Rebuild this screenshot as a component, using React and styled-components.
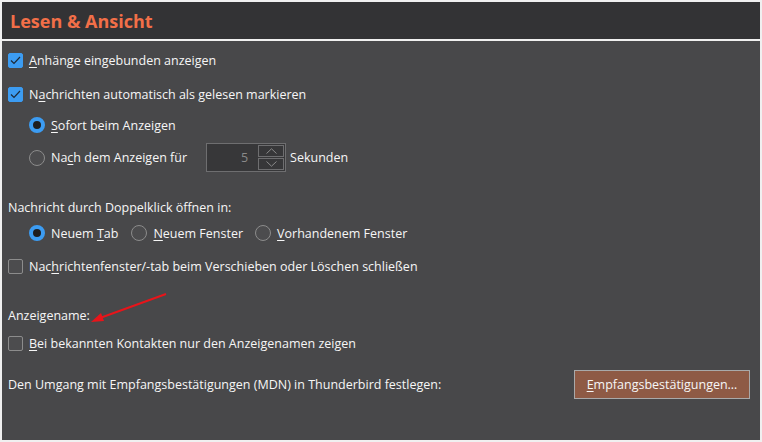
import React from 'react';
import styled, { createGlobalStyle } from 'styled-components';

var GlobalStyle = createGlobalStyle`
    html, body {
        margin: 0;
        padding: 0;
        background: #f0f0f0;
    }
    body {
        font-family: 'Open Sans', 'Noto Sans', sans-serif;
        font-size: 12.5px;
        color: #f6f6f6;
    }
`;

var Frame = styled.div`
    width: 762px;
    height: 442px;
    box-sizing: border-box;
    padding: 2px 2px 2px 2px;
    display: flex;
    flex-direction: column;
    gap: 2px;
    position: relative;
`;

var Header = styled.header`
    height: 37px;
    background: #333335;
    display: flex;
    align-items: center;
    padding-left: 8px;

    h1 {
        margin: 0;
        font-size: 18px;
        font-weight: 700;
        color: #f26f48;
    }
`;

var Panel = styled.section`
    flex: 1;
    background: #48484a;
    padding: 9px 10px 0 6px;
    display: flex;
    flex-direction: column;
`;

var Row = styled.div`
    display: flex;
    align-items: center;
    min-height: 20px;
    margin-top: ${(p) => p.$top || 0}px;
    padding-left: ${(p) => (p.$indent ? 21 : 0)}px;
    justify-content: ${(p) => (p.$spread ? 'space-between' : 'flex-start')};
    white-space: nowrap;
`;

var Box = styled.span`
    width: 15px;
    height: 15px;
    box-sizing: border-box;
    border-radius: 2px;
    margin-right: 6px;
    flex: none;
    display: flex;
    align-items: center;
    justify-content: center;
    background: ${(p) => (p.$on ? '#3c9cf2' : '#4c4c4e')};
    border: 1px solid ${(p) => (p.$on ? '#3c9cf2' : '#8c8c8c')};
`;

var Dot = styled.span`
    width: 16px;
    height: 16px;
    box-sizing: border-box;
    border-radius: 50%;
    margin-right: 6px;
    flex: none;
    background: ${(p) => (p.$on ? '#1e1e20' : '#4c4c4e')};
    border: ${(p) => (p.$on ? '4px solid #3c9cf2' : '1px solid #8c8c8c')};
`;

var Choice = styled.label`
    display: inline-flex;
    align-items: center;
    margin-right: ${(p) => p.$gap || 0}px;

    u {
        text-decoration-thickness: 1px;
        text-underline-offset: 2px;
    }
`;

var Spin = styled.div`
    display: flex;
    width: 80px;
    height: 29px;
    box-sizing: border-box;
    border: 1px solid #6e6e70;
    background: #373739;
    margin: 0 4px 0 19px;

    .value {
        flex: 1;
        display: flex;
        align-items: center;
        justify-content: flex-end;
        padding-right: 10px;
        color: #8a8a8a;
    }

    .arrows {
        width: 26px;
        display: flex;
        flex-direction: column;
        padding: 1px 1px 1px 0;
        gap: 1px;
    }

    .arrows span {
        flex: 1;
        border: 1px solid #6e6e70;
        display: flex;
        align-items: center;
        justify-content: center;
    }
`;

var Button = styled.button`
    width: 176px;
    height: 29px;
    background: #8e5a45;
    border: 1px solid #a9a9a9;
    color: #f6f6f6;
    font-family: inherit;
    font-size: 12.5px;
    padding: 0;

    u {
        text-underline-offset: 2px;
    }
`;

var Annotation = styled.svg`
    position: absolute;
    left: 0;
    top: 0;
    pointer-events: none;
`;

function Check({ on, children }) {
    return (
        <Choice>
            <Box $on={on}>
                {on && (
                    <svg width="11" height="9" viewBox="0 0 11 9">
                        <path d="M1 4.5 L4 7.5 L10 1" fill="none" stroke="#1d2a38" strokeWidth="1.2" />
                    </svg>
                )}
            </Box>
            {children}
        </Choice>
    );
}

function Radio({ on, gap, children }) {
    return (
        <Choice $gap={gap}>
            <Dot $on={on} />
            {children}
        </Choice>
    );
}

export default function App() {
    return (
        <>
            <GlobalStyle />
            <Frame>
                <Header>
                    <h1>Lesen &amp; Ansicht</h1>
                </Header>
                <Panel>
                    <Row>
                        <Check on>
                            <span><u>A</u>nhänge eingebunden anzeigen</span>
                        </Check>
                    </Row>
                    <Row $top={14}>
                        <Check on>
                            <span>N<u>a</u>chrichten automatisch als gelesen markieren</span>
                        </Check>
                    </Row>
                    <Row $top={11} $indent>
                        <Radio on>
                            <span><u>S</u>ofort beim Anzeigen</span>
                        </Radio>
                    </Row>
                    <Row $top={8} $indent>
                        <Radio>
                            <span>Na<u>c</u>h dem Anzeigen für</span>
                        </Radio>
                        <Spin>
                            <div className="value">5</div>
                            <div className="arrows">
                                <span>
                                    <svg width="11" height="6" viewBox="0 0 11 6">
                                        <path d="M0.5 5.5 L5.5 0.8 L10.5 5.5" fill="none" stroke="#8a8a8a" />
                                    </svg>
                                </span>
                                <span>
                                    <svg width="11" height="6" viewBox="0 0 11 6">
                                        <path d="M0.5 0.5 L5.5 5.2 L10.5 0.5" fill="none" stroke="#8a8a8a" />
                                    </svg>
                                </span>
                            </div>
                        </Spin>
                        <span>Sekunden</span>
                    </Row>
                    <Row $top={25}>Nachricht durch Doppelklick öffnen in:</Row>
                    <Row $top={6} $indent>
                        <Radio on gap={13}>
                            <span>Neuem <u>T</u>ab</span>
                        </Radio>
                        <Radio gap={12}>
                            <span><u>N</u>euem Fenster</span>
                        </Radio>
                        <Radio>
                            <span><u>V</u>orhandenem Fenster</span>
                        </Radio>
                    </Row>
                    <Row $top={13}>
                        <Check>
                            <span>Nac<u>h</u>richtenfenster/-tab beim Verschieben oder Löschen schließen</span>
                        </Check>
                    </Row>
                    <Row $top={29}>Anzeigename:</Row>
                    <Row $top={8}>
                        <Check>
                            <span><u>B</u>ei bekannten Kontakten nur den Anzeigenamen zeigen</span>
                        </Check>
                    </Row>
                    <Row $top={17} $spread>
                        <span>Den Umgang mit Empfangsbestätigungen (MDN) in Thunderbird festlegen:</span>
                        <Button>
                            <u>E</u>mpfangsbestätigungen…
                        </Button>
                    </Row>
                </Panel>
                <Annotation width="762" height="442">
                    <line x1="166" y1="294" x2="100" y2="318" stroke="#e8141a" strokeWidth="2" />
                    <polygon points="91,322 101,313 104,321" fill="#e8141a" />
                </Annotation>
            </Frame>
        </>
    );
}
